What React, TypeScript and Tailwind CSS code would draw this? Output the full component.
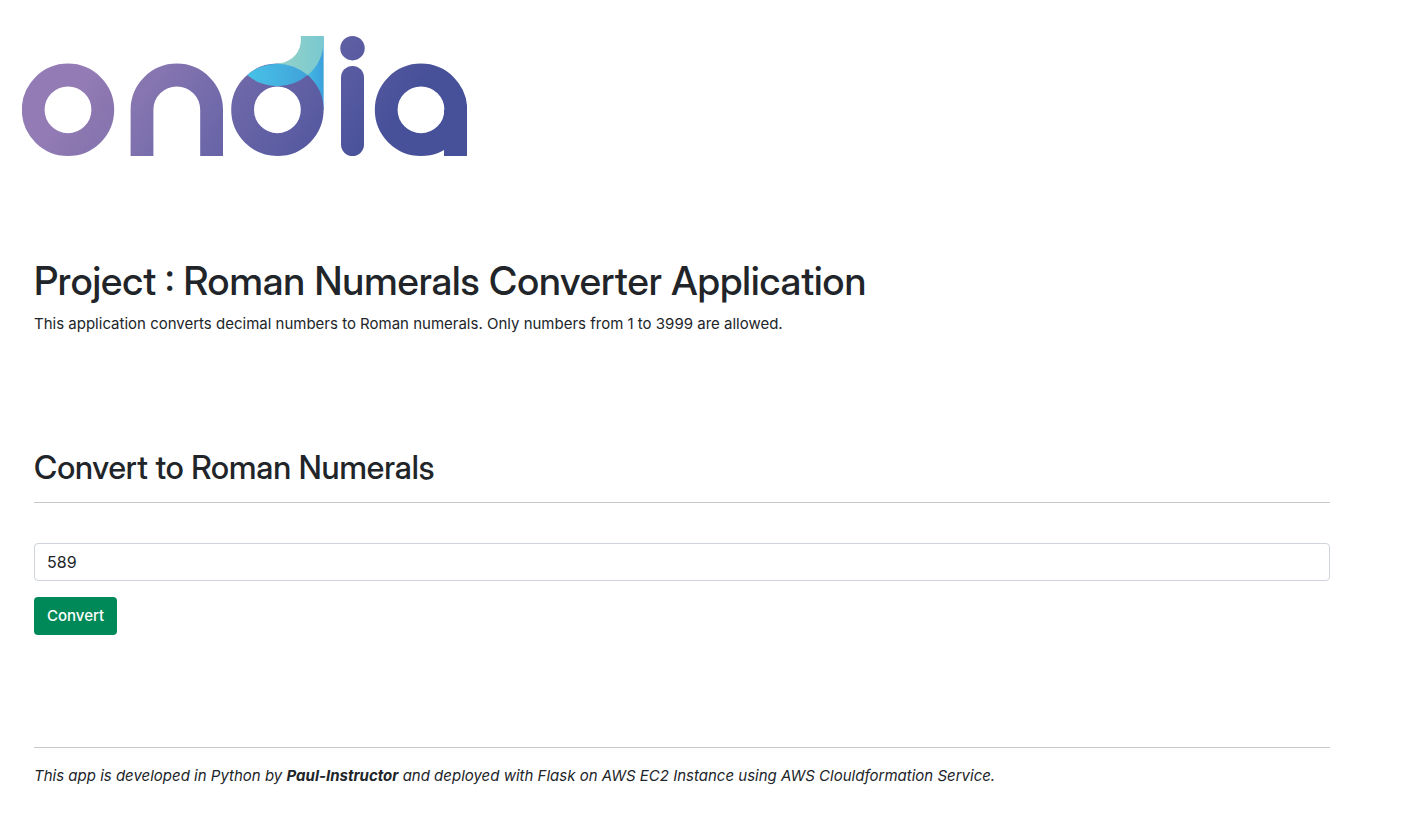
export default function App() {
  return (
    <main className="min-h-screen bg-white px-[22px] pt-9 font-['Inter',sans-serif] text-[15px] text-[#212529]">
      <svg viewBox="0 0 445 120" className="block h-[120px] w-[445px]" role="img" aria-label="ondia">
        <defs>
          <linearGradient id="word" gradientUnits="userSpaceOnUse" x1="60" y1="50" x2="290" y2="210">
            <stop offset="0" stopColor="#937cb5" />
            <stop offset="0.1" stopColor="#8b76b0" />
            <stop offset="0.2" stopColor="#8575b0" />
            <stop offset="0.5" stopColor="#6b66a8" />
            <stop offset="0.75" stopColor="#595ba1" />
            <stop offset="0.98" stopColor="#475199" />
          </linearGradient>
          <linearGradient id="stem" gradientUnits="userSpaceOnUse" x1="255" y1="0" x2="302" y2="0">
            <stop offset="0" stopColor="#96d2c8" />
            <stop offset="1" stopColor="#79c9d0" />
          </linearGradient>
          <linearGradient id="cap" gradientUnits="userSpaceOnUse" x1="225" y1="0" x2="286" y2="0">
            <stop offset="0" stopColor="#47c2e7" />
            <stop offset="1" stopColor="#41a2da" />
          </linearGradient>
          <linearGradient id="edge" gradientUnits="userSpaceOnUse" x1="284" y1="0" x2="302" y2="0">
            <stop offset="0" stopColor="#43bce6" />
            <stop offset="1" stopColor="#3c9edb" />
          </linearGradient>
        </defs>
        <path d="M301.600 0V74H297L280 39L298 6z" fill="url(#edge)" />
        <g fill="none" stroke="url(#word)" strokeWidth="22.800">
          <circle cx="46" cy="73.800" r="34.800" />
          <path d="M120 120V73.800a34.800 34.800 0 0 1 69.600 0V120" />
          <circle cx="255.400" cy="73.800" r="34.800" />
          <circle cx="399" cy="73.800" r="34.800" />
        </g>
        <g fill="url(#word)">
          <circle cx="330.500" cy="12.200" r="12.200" />
          <rect x="319" y="30" width="23" height="90" rx="11.500" />
          <path d="M422 73.800h23V120h-23v-6.500l-2-8 2-12z" />
        </g>
        <path d="M278.800 0h22.800v4A46.200 46.200 0 0 1 286 39L280 41L255.400 27.600C269 26.500 278.800 17 278.800 4z" fill="url(#stem)" />
        <path d="M225.200 39A46.200 46.200 0 0 1 285.600 39A46.200 46.200 0 0 1 225.200 39z" fill="url(#cap)" />
      </svg>
      <div className="pl-3 pr-16">
        <h1 className="mt-[101px] font-['Inter_Display','Inter',sans-serif] text-[39px] font-medium leading-12">Project : Roman Numerals Converter Application</h1>
        <p className="mt-[7px] leading-6">This application converts decimal numbers to Roman numerals. Only numbers from 1 to 3999 are allowed.</p>
        <h2 className="mt-28 font-['Inter_Display','Inter',sans-serif] text-[32px] font-medium leading-10">Convert to Roman Numerals</h2>
        <hr className="mt-3.5 border-[#c7c8c9]" />
        <form className="mt-10">
          <input aria-label="Number" defaultValue="589" className="block h-[38px] w-full rounded border border-[#ced4da] px-3 text-base" />
          <button type="button" className="mt-4 h-[38px] rounded bg-[#008958] px-[13px] font-medium text-white">Convert</button>
        </form>
        <hr className="mt-28 border-[#c7c8c9]" />
        <p className="mt-4 italic leading-6">This app is developed in Python by <strong>Paul-Instructor</strong> and deployed with Flask on AWS EC2 Instance using AWS Clouldformation Service.</p>
      </div>
    </main>
  );
}
